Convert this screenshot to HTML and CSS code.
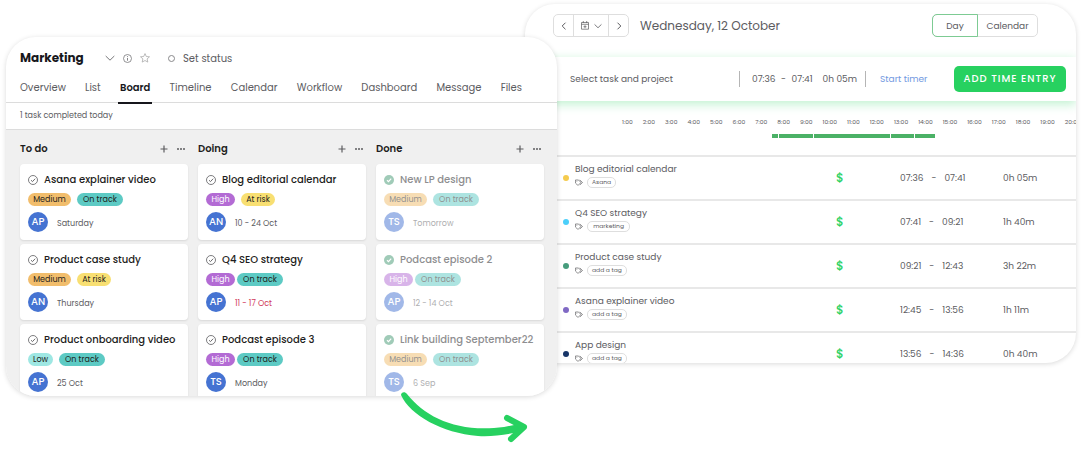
FILE: index.html
```html
<!DOCTYPE html>
<html lang="en">
<head>
    <meta charset="UTF-8">
    <meta name="viewport" content="width=device-width, initial-scale=1.0">
    <title>Marketing board and time entries</title>
    <link rel="stylesheet" href="styles.css">
</head>
<body>
    <!-- shared icons -->
    <svg class="sprite" width="0" height="0" aria-hidden="true">
        <symbol id="check" viewBox="0 0 10 10"><circle cx="5" cy="5" r="4.5" fill="none" stroke="currentColor" stroke-width=".8"/><path d="M3 5.2l1.5 1.4L7.2 3.7" fill="none" stroke="currentColor" stroke-width=".9"/></symbol>
        <symbol id="check-done" viewBox="0 0 10 10"><circle cx="5" cy="5" r="5" fill="#a0cbb8"/><path d="M3 5.2l1.5 1.4L7.2 3.7" fill="none" stroke="#fff" stroke-width="1.2"/></symbol>
        <symbol id="plus" viewBox="0 0 8 8"><path d="M4 .5v7M.5 4h7" stroke="currentColor" stroke-width="1.2"/></symbol>
        <symbol id="dots" viewBox="0 0 8 8"><path d="M0 4h2M3 4h2M6 4h2" stroke="currentColor" stroke-width="1.5"/></symbol>
        <symbol id="down" viewBox="0 0 10 10"><path d="M.7 3l4.3 4.2L9.3 3" fill="none" stroke="currentColor" stroke-width="1"/></symbol>
        <symbol id="tag" viewBox="0 0 8 7"><path d="M.4 1h3.200l2.400 2.500-2.400 2.400H2.300L.4 4zM4.800 1l2.700 2.500-2.600 2.400" fill="none" stroke="currentColor" stroke-width=".7" stroke-linejoin="round"/><circle cx="1.900" cy="2.400" r=".4" fill="currentColor"/></symbol>
    </svg>

    <main class="stage">
        <section class="panel board">
            <header class="board-header">
                <div class="title-row">
                    <h1>Marketing</h1>
                    <div class="title-icons">
                        <svg width="10" height="10"><use href="#down"/></svg>
                        <svg width="9" height="9" viewBox="0 0 9 9" fill="none" stroke="currentColor"><circle cx="4.5" cy="4.5" r="4" stroke-width=".8"/><path d="M4.5 4v2.700M4.5 2.200v.9" stroke-width=".9"/></svg>
                        <svg class="star" width="10" height="10" viewBox="0 0 10 10"><path d="M5 .6l1.300 2.900 3.200.3-2.400 2.100.7 3.200L5 7.500 2.200 9.100l.7-3.200L.5 3.800l3.200-.3z" fill="none" stroke="currentColor" stroke-width=".8" stroke-linejoin="round"/></svg>
                    </div>
                    <button class="status"><span class="ring"></span>Set status</button>
                </div>
                <nav class="tabs">
                    <a href="#">Overview</a>
                    <a href="#">List</a>
                    <a href="#" class="active">Board</a>
                    <a href="#">Timeline</a>
                    <a href="#">Calendar</a>
                    <a href="#">Workflow</a>
                    <a href="#">Dashboard</a>
                    <a href="#">Message</a>
                    <a href="#">Files</a>
                </nav>
            </header>
            <p class="summary">1 task completed today</p>

            <div class="columns">
                <div class="column">
                    <div class="column-head">
                        <h2>To do</h2>
                        <button aria-label="Add task"><svg width="8" height="8"><use href="#plus"/></svg></button>
                        <button aria-label="More"><svg width="8" height="8"><use href="#dots"/></svg></button>
                    </div>
                    <article class="card">
                        <h3><svg width="10" height="10"><use href="#check"/></svg>Asana explainer video</h3>
                        <div class="tags"><span class="tag medium">Medium</span><span class="tag track">On track</span></div>
                        <div class="meta"><span class="avatar">AP</span><span class="date">Saturday</span></div>
                    </article>
                    <article class="card">
                        <h3><svg width="10" height="10"><use href="#check"/></svg>Product case study</h3>
                        <div class="tags"><span class="tag medium">Medium</span><span class="tag risk">At risk</span></div>
                        <div class="meta"><span class="avatar">AN</span><span class="date">Thursday</span></div>
                    </article>
                    <article class="card">
                        <h3><svg width="10" height="10"><use href="#check"/></svg>Product onboarding video</h3>
                        <div class="tags"><span class="tag low">Low</span><span class="tag track">On track</span></div>
                        <div class="meta"><span class="avatar">AP</span><span class="date">25 Oct</span></div>
                    </article>
                </div>

                <div class="column">
                    <div class="column-head">
                        <h2>Doing</h2>
                        <button aria-label="Add task"><svg width="8" height="8"><use href="#plus"/></svg></button>
                        <button aria-label="More"><svg width="8" height="8"><use href="#dots"/></svg></button>
                    </div>
                    <article class="card">
                        <h3><svg width="10" height="10"><use href="#check"/></svg>Blog editorial calendar</h3>
                        <div class="tags"><span class="tag high">High</span><span class="tag risk">At risk</span></div>
                        <div class="meta"><span class="avatar">AN</span><span class="date">10 - 24 Oct</span></div>
                    </article>
                    <article class="card">
                        <h3><svg width="10" height="10"><use href="#check"/></svg>Q4 SEO strategy</h3>
                        <div class="tags tight"><span class="tag high">High</span><span class="tag track">On track</span></div>
                        <div class="meta"><span class="avatar">AP</span><span class="date late">11 - 17 Oct</span></div>
                    </article>
                    <article class="card">
                        <h3><svg width="10" height="10"><use href="#check"/></svg>Podcast episode 3</h3>
                        <div class="tags tight"><span class="tag high">High</span><span class="tag track">On track</span></div>
                        <div class="meta"><span class="avatar">TS</span><span class="date">Monday</span></div>
                    </article>
                </div>

                <div class="column done">
                    <div class="column-head">
                        <h2>Done</h2>
                        <button aria-label="Add task"><svg width="8" height="8"><use href="#plus"/></svg></button>
                        <button aria-label="More"><svg width="8" height="8"><use href="#dots"/></svg></button>
                    </div>
                    <article class="card">
                        <h3><svg width="10" height="10"><use href="#check-done"/></svg>New LP design</h3>
                        <div class="tags"><span class="tag medium">Medium</span><span class="tag track">On track</span></div>
                        <div class="meta"><span class="avatar">TS</span><span class="date">Tomorrow</span></div>
                    </article>
                    <article class="card">
                        <h3><svg width="10" height="10"><use href="#check-done"/></svg>Podcast episode 2</h3>
                        <div class="tags tight"><span class="tag high">High</span><span class="tag track">On track</span></div>
                        <div class="meta"><span class="avatar">AP</span><span class="date">12 - 14 Oct</span></div>
                    </article>
                    <article class="card">
                        <h3><svg width="10" height="10"><use href="#check-done"/></svg>Link building September22</h3>
                        <div class="tags"><span class="tag medium">Medium</span><span class="tag track">On track</span></div>
                        <div class="meta"><span class="avatar">TS</span><span class="date">6 Sep</span></div>
                    </article>
                </div>
            </div>
        </section>

        <section class="panel tracker">
            <header class="tracker-header">
                <div class="date-nav">
                    <button aria-label="Previous day"><svg width="6" height="8" viewBox="0 0 6 8"><path d="M4.5.7L1.200 4l3.300 3.300" fill="none" stroke="currentColor"/></svg></button>
                    <button aria-label="Pick a date" class="pick">
                        <svg width="8" height="9" viewBox="0 0 8 9" fill="none" stroke="currentColor" stroke-width=".7"><path d="M.5 1.500h7v6.700h-7zM.5 3.300h7M2.300 0v2M5.700 0v2M4 4.200v3M2.500 5.700h3"/></svg>
                        <svg width="8" height="8"><use href="#down"/></svg>
                    </button>
                    <button aria-label="Next day"><svg width="6" height="8" viewBox="0 0 6 8"><path d="M1.500.7L4.800 4 1.500 7.300" fill="none" stroke="currentColor"/></svg></button>
                </div>
                <h2>Wednesday, 12 October</h2>
                <div class="view-toggle">
                    <button class="selected">Day</button>
                    <button>Calendar</button>
                </div>
            </header>

            <div class="entry-bar">
                <span class="task">Select task and project</span>
                <div class="entry-time">
                    <span>07:36</span><span class="dash">-</span><span>07:41</span>
                    <span class="total">0h 05m</span>
                </div>
                <a href="#" class="start">Start timer</a>
                <button class="add">ADD TIME ENTRY</button>
            </div>

            <div class="timeline">
                <div class="hours">
                    <span>1:00</span><span>2:00</span><span>3:00</span><span>4:00</span><span>5:00</span><span>6:00</span><span>7:00</span><span>8:00</span><span>9:00</span><span>10:00</span><span>11:00</span><span>12:00</span><span>13:00</span><span>14:00</span><span>15:00</span><span>16:00</span><span>17:00</span><span>18:00</span><span>19:00</span><span>20:00</span>
                </div>
                <div class="track-bar">
                    <i style="flex-grow: 6"></i><i style="flex-grow: 35"></i><i style="flex-grow: 77"></i><i style="flex-grow: 23"></i><i style="flex-grow: 21"></i>
                </div>
            </div>

            <ul class="entries">
                <li>
                    <span class="dot yellow"></span>
                    <div class="entry"><h3>Blog editorial calendar</h3><p><svg width="8" height="7"><use href="#tag"/></svg><span class="chip">Asana</span></p></div>
                    <span class="bill">$</span>
                    <span class="range"><span>07:36</span><span>-</span><span>07:41</span></span>
                    <span>0h 05m</span>
                </li>
                <li>
                    <span class="dot blue"></span>
                    <div class="entry"><h3>Q4 SEO strategy</h3><p><svg width="8" height="7"><use href="#tag"/></svg><span class="chip wide">marketing</span></p></div>
                    <span class="bill">$</span>
                    <span class="range"><span>07:41</span><span>-</span><span>09:21</span></span>
                    <span>1h 40m</span>
                </li>
                <li>
                    <span class="dot green"></span>
                    <div class="entry"><h3>Product case study</h3><p><svg width="8" height="7"><use href="#tag"/></svg><span class="chip">add a tag</span></p></div>
                    <span class="bill">$</span>
                    <span class="range"><span>09:21</span><span>-</span><span>12:43</span></span>
                    <span>3h 22m</span>
                </li>
                <li>
                    <span class="dot purple"></span>
                    <div class="entry"><h3>Asana explainer video</h3><p><svg width="8" height="7"><use href="#tag"/></svg><span class="chip">add a tag</span></p></div>
                    <span class="bill">$</span>
                    <span class="range"><span>12:45</span><span>-</span><span>13:56</span></span>
                    <span>1h 11m</span>
                </li>
                <li>
                    <span class="dot navy"></span>
                    <div class="entry"><h3>App design</h3><p><svg width="8" height="7"><use href="#tag"/></svg><span class="chip">add a tag</span></p></div>
                    <span class="bill">$</span>
                    <span class="range"><span>13:56</span><span>-</span><span>14:36</span></span>
                    <span>0h 40m</span>
                </li>
            </ul>
        </section>

        <!-- arrow from the board to the tracker -->
        <svg class="arrow" width="130" height="54" viewBox="0 0 130 54" fill="none">
            <path d="M1 4C1 1 5 0 7 3C26 27 58 42 104 36L119 33V41C105 44 90 46 78 45C42 42 10 24 1 4Z" fill="#27d160"/>
            <path d="M107 27L124 36L111 48" stroke="#27d160" stroke-width="6" stroke-linecap="round" stroke-linejoin="round"/>
        </svg>
    </main>
</body>
</html>
```
FILE: styles.css
```css
* {
    box-sizing: border-box;
}

body {
    font-family: Poppins, Inter, sans-serif;
    font-size: 9px;
    line-height: 16px;
    margin: 0;
    background: #fff;
    color: #5c5c5f;
}

h1, h2, h3, p, ul {
    margin: 0;
    padding: 0;
}

button {
    font: inherit;
    color: inherit;
    background: none;
    border: none;
    padding: 0;
    cursor: pointer;
}

a {
    color: inherit;
    text-decoration: none;
}

svg {
    display: block;
    flex: none;
}

.sprite {
    position: absolute;
}

/* Two overlapping panels */
.stage {
    position: relative;
    display: flex;
    align-items: flex-start;
    min-height: 100vh;
    padding: 4px 6px 0 6px;
}

.panel {
    max-height: 76vh;
    overflow: hidden;
    background: #fff;
    border-radius: 30px;
    box-shadow: 0 1px 5px rgba(0, 0, 0, 0.15);
}

.board {
    position: relative;
    z-index: 1;
    flex: 0 0 51.5%;
    margin-top: 33px;
}

.tracker {
    flex: 1;
    min-width: 0;
    margin-left: -32px;
}

/* Board header */
.board-header {
    padding: 12px 35px 0 14px;
    border-bottom: 1px solid #dcdcdc;
}

.title-row {
    display: flex;
    align-items: center;
    height: 18px;
}

.title-row h1 {
    width: 85px;
    font-size: 12px;
    font-weight: 700;
    color: #17171c;
}

.title-icons {
    display: flex;
    align-items: center;
    gap: 8px;
    color: #77777a;
}

.star {
    color: #aaa;
}

.status {
    display: flex;
    align-items: center;
    gap: 8px;
    margin-left: 18px;
    padding-top: 1px;
    font-size: 10px;
}

.ring {
    width: 7px;
    height: 7px;
    border: 1px solid #88888b;
    border-radius: 50%;
}

.tabs {
    display: flex;
    justify-content: space-between;
    margin-top: 11px;
    font-size: 10px;
    line-height: 20px;
}

.tabs a {
    height: 24px;
}

.tabs .active {
    height: 26px;
    margin: 0 -2px -2px;
    padding: 0 2px;
    border-bottom: 2px solid #17171c;
    font-weight: 600;
    color: #17171c;
}

.summary {
    padding: 5px 14px;
    font-size: 8px;
    border-bottom: 1px solid #dcdcdc;
}

/* Columns and cards */
.columns {
    display: grid;
    grid-template-columns: repeat(3, minmax(0, 1fr));
    gap: 10px;
    padding: 11px 13px 10px 14px;
    background: #f0f0f0;
}

.column-head {
    display: flex;
    align-items: center;
    gap: 9px;
    padding-right: 3px;
    margin-bottom: 7px;
}

.column-head h2 {
    flex: 1;
    font-size: 10px;
    font-weight: 600;
    color: #1d1d20;
}

.card {
    padding: 8px;
    margin-bottom: 4px;
    background: #fff;
    border-radius: 4px;
    box-shadow: 0 1px 2px rgba(0, 0, 0, 0.1);
}

.card h3 {
    display: flex;
    align-items: center;
    gap: 6px;
    font-size: 10px;
    font-weight: 500;
    color: #1d1d20;
    white-space: nowrap;
}

.card h3 svg {
    color: #5c5c5f;
}

.tags {
    display: flex;
    gap: 6px;
    margin-top: 5px;
}

.tags.tight {
    gap: 2px;
}

.tag {
    width: 46px;
    border-radius: 7px;
    font-size: 8px;
    line-height: 13px;
    text-align: center;
    color: #1d1d20;
}

.tag.medium { width: 43px; background: #f1bd6c; }
.tag.track { background: #5dcac4; }
.tag.high { width: 29px; background: #b36bd4; color: #fff; }
.tag.risk { width: 34px; background: #f8df72; }
.tag.low { width: 25px; background: #9ee7e3; }

.meta {
    display: flex;
    align-items: center;
    gap: 9px;
    margin-top: 6px;
}

.avatar {
    width: 20px;
    border-radius: 50%;
    font-size: 10px;
    font-weight: 500;
    line-height: 20px;
    text-align: center;
    background: #4573d2;
    color: #fff;
}

.date {
    padding-top: 3px;
    font-size: 8px;
}

.date.late {
    color: #d1395a;
}

.done h3 {
    color: #8e8e90;
}

.done .tags, .done .meta {
    opacity: 0.5;
}

/* Tracker header */
.tracker-header {
    display: flex;
    align-items: center;
    padding: 10px 38px 20px 28px;
}

.date-nav, .view-toggle {
    display: flex;
    height: 23px;
    border: 1px solid #dedede;
    border-radius: 5px;
}

.date-nav button {
    display: flex;
    align-items: center;
    justify-content: center;
    width: 19px;
}

.date-nav .pick {
    width: 36px;
    gap: 5px;
    border: solid #dedede;
    border-width: 0 1px;
}

.tracker-header h2 {
    flex: 1;
    margin-left: 11px;
    font-size: 12px;
    font-weight: 400;
}

.view-toggle button {
    width: 59px;
}

.view-toggle .selected {
    width: 46px;
    margin: -1px 0 -1px -1px;
    border: 1px solid #7dcb93;
    border-radius: 5px 0 0 5px;
}

.entry-bar {
    display: flex;
    align-items: center;
    height: 44px;
    padding: 0 10px 0 45px;
    box-shadow: 0 3px 10px rgba(39, 209, 96, 0.3);
}

.task {
    flex: 1;
}

.entry-time {
    display: flex;
    width: 127px;
    padding-left: 12px;
    border: solid #b5b5b5;
    border-width: 0 1px;
}

.dash {
    flex: 1;
    text-align: center;
}

.total {
    margin: 0 8px 0 10px;
}

.start {
    width: 88px;
    padding-left: 14px;
    color: #7299df;
}

.add {
    width: 112px;
    height: 26px;
    border-radius: 5px;
    background: #27d160;
    color: #fff;
    font-size: 10px;
    font-weight: 500;
    letter-spacing: 1px;
}

/* Timeline */
.timeline {
    height: 54px;
    padding: 13px 0 0 97px;
}

.hours {
    display: flex;
    justify-content: space-between;
    margin-right: -5px;
    font-size: 6px;
}

.track-bar {
    display: flex;
    gap: 1px;
    width: 36%;
    margin: 4px 0 0 33%;
}

.track-bar i {
    height: 4px;
    background: #4bb166;
}

/* Time entries */
.entries {
    list-style: none;
}

.entries li {
    display: grid;
    grid-template-columns: 6px 1fr 64px 103px 73px;
    align-items: center;
    height: 44px;
    padding-left: 38px;
    border-top: 2px solid #e8e8e8;
}

.dot {
    width: 6px;
    height: 6px;
    border-radius: 50%;
}

.yellow { background: #f5cb4e; }
.blue { background: #4ccffa; }
.green { background: #469c7c; }
.purple { background: #8069c4; }
.navy { background: #173568; }

.entry {
    padding: 0 0 7px 6px;
}

.entry h3 {
    font-size: 9px;
    font-weight: 400;
    line-height: 14px;
}

.entry p {
    display: flex;
    align-items: center;
    gap: 4px;
    margin-top: 1px;
}

.chip {
    min-width: 28px;
    padding: 0 4px;
    border: 1px solid #dedede;
    border-radius: 5px;
    font-size: 6px;
    line-height: 9px;
    text-align: center;
}

.chip.wide {
    min-width: 43px;
}

.bill {
    font-size: 12px;
    font-weight: 500;
    color: #27d160;
}

.range {
    display: flex;
    gap: 8px;
}

/* Arrow */
.arrow {
    position: absolute;
    z-index: 2;
    top: 391px;
    left: 37%;
}
```
